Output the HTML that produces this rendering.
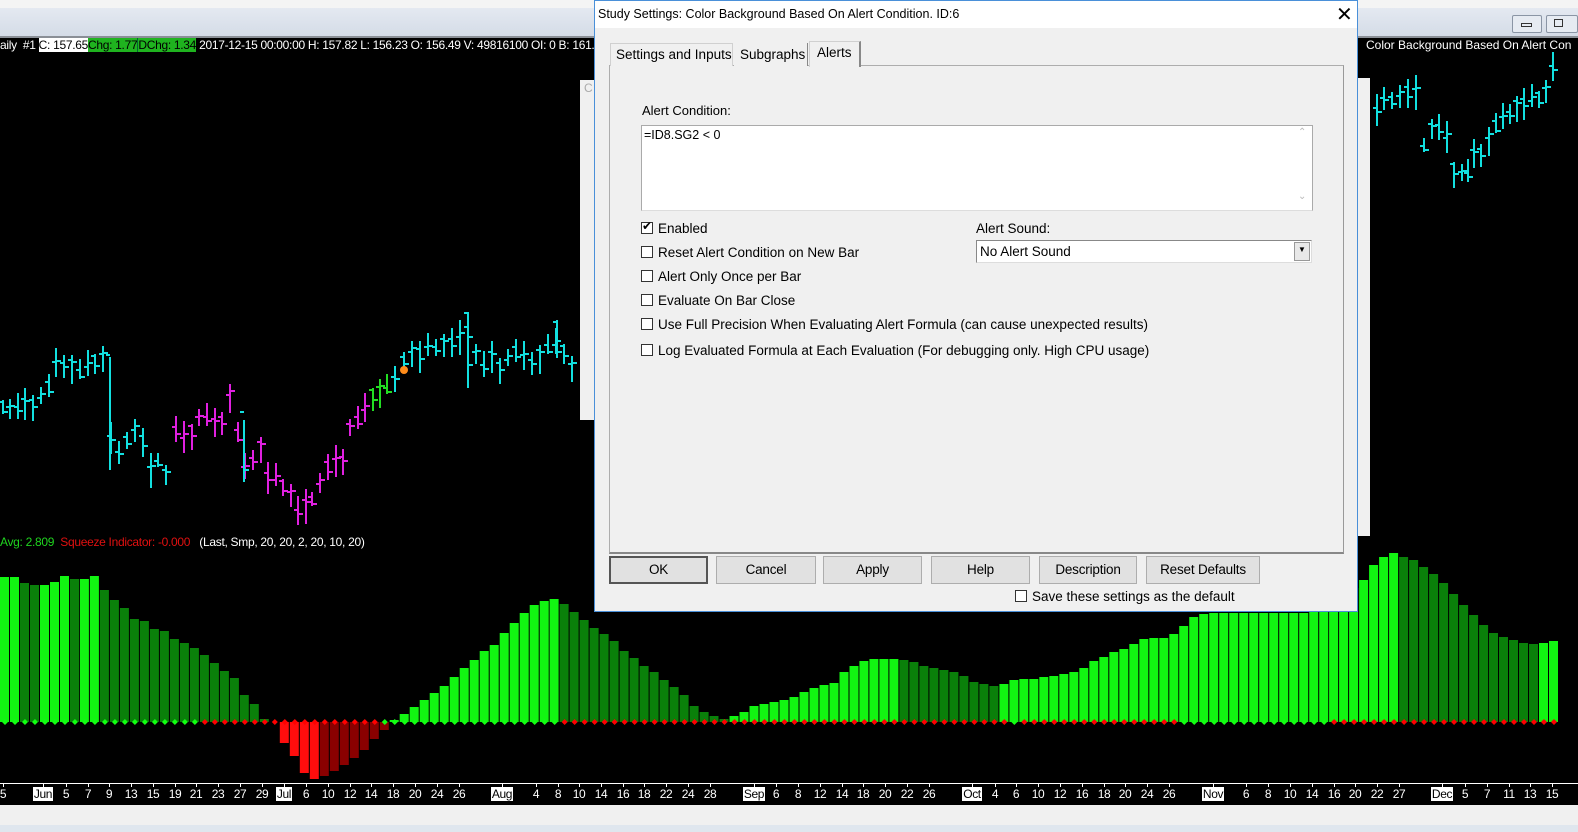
<!DOCTYPE html>
<html><head><meta charset="utf-8"><style>
*{margin:0;padding:0;box-sizing:border-box}
body{width:1578px;height:832px;overflow:hidden;background:#000;font-family:"Liberation Sans",sans-serif;position:relative}
.abs{position:absolute}
.t{position:absolute;white-space:nowrap}
.dlg{font-size:13.5px;color:#000}
.cb{position:absolute;width:12px;height:12px;border:1px solid #333;background:#fff}
.btn{position:absolute;top:555px;height:28px;background:#e1e1e1;border:1px solid #adadad;font-size:13.5px;text-align:center;line-height:26px;letter-spacing:-0.2px}
</style></head><body>
<div class="abs" style="left:0;top:0;width:1578px;height:8px;background:#f4f4f4"></div>
<div class="abs" style="left:0;top:8px;width:1578px;height:30px;background:linear-gradient(#e4e9f1,#d3dbe6)"></div>
<div class="abs" style="left:0;top:36px;width:1578px;height:2px;background:#8a8f96"></div>
<div class="abs" style="left:1512px;top:15px;width:30px;height:18px;border:1px solid #8a95a5;border-radius:2px;background:#e6ebf2"></div>
<div class="abs" style="left:1521px;top:23px;width:11px;height:4px;border:1px solid #333"></div>
<div class="abs" style="left:1546px;top:15px;width:32px;height:18px;border:1px solid #8a95a5;border-radius:2px;background:#e6ebf2"></div>
<div class="abs" style="left:1554px;top:19px;width:9px;height:8px;border:1px solid #333"></div>
<div class="t" style="left:0;top:38px;font-size:12px;color:#fff;line-height:15px;letter-spacing:-0.3px">aily&nbsp; #1 <span style="background:#fff;color:#000">C: 157.65</span><span style="background:#1fb31f;color:#000">Chg: 1.77</span><span style="background:#1fb31f;color:#000;border-left:1px solid #063">DChg: 1.34</span> 2017-12-15 00:00:00 H: 157.82 L: 156.23 O: 156.49 V: 49816100 OI: 0 B: 161.64</div>
<div class="t" style="left:1366px;top:38px;font-size:12px;color:#fff;line-height:15px">Color Background Based On Alert Con</div>
<div class="t" style="left:0;top:535px;font-size:12px;line-height:15px;letter-spacing:-0.3px"><span style="color:#1fd41f">Avg: 2.809</span>&nbsp; <span style="color:#e01010">Squeeze Indicator: -0.000</span>&nbsp;&nbsp; <span style="color:#fff">(Last, Smp, 20, 20, 2, 20, 10, 20)</span></div>
<svg class="abs" style="left:0;top:0" width="1578" height="832" id="sv"></svg>
<div class="abs" style="left:0;top:783px;width:1578px;height:1px;background:#fff"></div>
<div id="ax"></div>
<div class="abs" style="left:0;top:805px;width:1578px;height:20px;background:#f0f0f0"></div>
<div class="abs" style="left:0;top:825px;width:1578px;height:7px;background:#dfe6ee"></div>
<div class="abs" style="left:580px;top:80px;width:16px;height:340px;background:#f0f0f0"></div>
<div class="t" style="left:584px;top:81px;font-size:12px;color:#aaa">C</div>
<div class="abs" style="left:1356px;top:78px;width:14px;height:458px;background:#f0f0f0"></div>
<div class="abs dlg" style="left:594px;top:0;width:764px;height:612px;background:#f0f0f0;border:1px solid #4a90d9">
 <div class="abs" style="left:0;top:0;width:762px;height:27px;background:#fff"></div>
 <div class="t" style="left:3px;top:6px;font-size:12.5px">Study Settings: Color Background Based On Alert Condition. ID:6</div>
 <div class="t" style="left:741px;top:1px;font-size:20px;font-weight:300">✕</div>
 <div class="abs" style="left:14px;top:64px;width:735px;height:489px;border:1px solid #adadad;border-right-color:#999;border-bottom:2px solid #888;background:#f0f0f0"></div>
 <div class="abs" style="left:15px;top:42px;width:123px;height:23px;border:1px solid #d0d0d0;border-bottom:none;background:#f0f0f0"></div>
 <div class="t" style="left:21px;top:46px">Settings and Inputs</div>
 <div class="abs" style="left:139px;top:42px;width:74px;height:23px;border-right:1px solid #888;background:#f0f0f0"></div>
 <div class="t" style="left:145px;top:46px">Subgraphs</div>
 <div class="abs" style="left:214px;top:40px;width:52px;height:26px;border:1px solid #d0d0d0;border-right:2px solid #888;border-bottom:none;background:#f0f0f0"></div>
 <div class="t" style="left:222px;top:44px">Alerts</div>
 <div class="t" style="left:47px;top:102px;font-size:13px">Alert Condition:</div>
 <div class="abs" style="left:46px;top:124px;width:672px;height:86px;background:#fff;border:1px solid #aaa;border-bottom-color:#ddd"></div>
 <div class="t" style="left:49px;top:127px;font-size:12.5px">=ID8.SG2 &lt; 0</div>
 <div class="t" style="left:703px;top:126px;font-size:10px;color:#bbb">⌃</div>
 <div class="t" style="left:703px;top:190px;font-size:10px;color:#bbb">⌄</div>
 <div class="cb" style="left:46px;top:221px"></div><div class="t" style="left:47px;top:218px;font-size:12px">✔</div>
 <div class="t" style="left:63px;top:220px">Enabled</div>
 <div class="cb" style="left:46px;top:245px"></div><div class="t" style="left:63px;top:244px">Reset Alert Condition on New Bar</div>
 <div class="cb" style="left:46px;top:269px"></div><div class="t" style="left:63px;top:268px">Alert Only Once per Bar</div>
 <div class="cb" style="left:46px;top:293px"></div><div class="t" style="left:63px;top:292px">Evaluate On Bar Close</div>
 <div class="cb" style="left:46px;top:317px"></div><div class="t" style="left:63px;top:316px">Use Full Precision When Evaluating Alert Formula (can cause unexpected results)</div>
 <div class="cb" style="left:46px;top:343px"></div><div class="t" style="left:63px;top:342px">Log Evaluated Formula at Each Evaluation (For debugging only. High CPU usage)</div>
 <div class="t" style="left:381px;top:220px">Alert Sound:</div>
 <div class="abs" style="left:381px;top:239px;width:336px;height:23px;background:#fff;border:1px solid #888;border-right-color:#ddd;border-bottom-color:#ddd"></div>
 <div class="t" style="left:385px;top:243px">No Alert Sound</div>
 <div class="abs" style="left:699px;top:241px;width:16px;height:19px;background:#e8e8e8;border:1px solid #999"></div>
 <div class="t" style="left:703px;top:244px;font-size:8px">▼</div>
 <div class="btn" style="left:14px;width:99px;border:2px solid #555;line-height:24px">OK</div>
 <div class="btn" style="left:121px;width:100px">Cancel</div>
 <div class="btn" style="left:228px;width:99px">Apply</div>
 <div class="btn" style="left:336px;width:99px">Help</div>
 <div class="btn" style="left:444px;width:98px">Description</div>
 <div class="btn" style="left:551px;width:114px">Reset Defaults</div>
 <div class="cb" style="left:420px;top:589px"></div>
 <div class="t" style="left:437px;top:588px">Save these settings as the default</div>
</div>
<script>
var sv=document.getElementById('sv'),h='';
var tops=[577,577,583,585,585,582,576,579,579,576,590,600,608,619,621,629,631,639,643,648,655,663,671,678,695,704,719,722,743,756,773,779,776,771,765,758,750,739,730,720,714,707,700,693,686,677,668,660,651,645,633,623,613,605,601,599,604,612,620,628,634,641,651,658,666,672,680,687,695,706,712,716,719,716,712,706,704,702,700,697,692,688,685,683,672,666,661,659,659,659,660,662,666,668,670,672,676,682,684,686,684,680,679,679,677,676,674,672,668,661,657,652,649,644,639,638,638,634,626,617,614,613,613,613,613,613,613,613,613,613,613,611,604,599,591,588,580,565,557,553,557,560,567,574,583,594,605,615,625,633,637,640,643,644,643,641];
var Z=722,p=1559/tops.length;
for(var i=0;i<tops.length;i++){var x=i*p,t=tops[i],v=Z-t,pv=i?Z-tops[i-1]:v;var c;
 if(t<=Z){c=(v>=pv)?'#12f512':'#0a800a';h+='<rect x="'+x.toFixed(1)+'" y="'+t+'" width="'+(p-1).toFixed(1)+'" height="'+(Z-t)+'" fill="'+c+'"/>';}
 else{c=(t>=tops[i-1])?'#ff0d0d':'#8a0000';h+='<rect x="'+x.toFixed(1)+'" y="'+Z+'" width="'+(p-1).toFixed(1)+'" height="'+(t-Z)+'" fill="'+c+'"/>';}
 var red=(x>195&&x<375)||(x>550&&x<1170&&!(x>1000&&x<1010))||(x>1320);
 var cx=x+p/2;h+='<path d="M'+cx+' '+(Z-3)+'l3 3-3 3-3-3z" fill="'+(red?'#f00':'#1f1')+'"/>';}
function bar(x,o,c,hi,lo,col){h+='<path d="M'+x+' '+hi+'V'+lo+'M'+(x-4)+' '+o+'H'+x+'M'+x+' '+c+'H'+(x+5)+'" stroke="'+col+'" stroke-width="2" fill="none"/>';}
var pts=[[3,408],[10,410],[18,407],[25,405],[33,403],[41,398],[49,388],[56,365],[64,363],[72,366],[80,373],[88,367],[95,362],[103,357],[111,436],[119,458],[127,440],[135,430],[143,442],[151,470],[158,461],[166,476],[176,430],[184,438],[192,432],[199,420],[207,417],[215,425],[222,420],[230,395],[238,436],[245,470],[253,458],[261,448],[268,476],[276,480],[283,487],[291,495],[298,510],[306,506],[312,500],[320,484],[328,468],[336,462],[343,457],[350,430],[358,420],[365,410],[373,396],[380,390],[387,388],[395,383],[404,360],[412,352],[420,355],[428,350],[436,347],[444,345],[452,342],[460,337],[468,333],[476,355],[484,365],[492,358],[500,366],[508,360],[516,353],[524,358],[532,360],[540,356],[548,348],[556,345],[564,352],[572,367],[1377,108],[1384,104],[1392,100],[1400,96],[1408,93],[1416,92],[1424,146],[1432,130],[1439,128],[1447,138],[1454,170],[1462,175],[1468,173],[1474,156],[1481,152],[1489,138],[1496,127],[1503,120],[1510,112],[1517,107],[1524,102],[1532,101],[1539,99],[1546,91],[1553,66]];
for(var j=0;j<pts.length;j++){var q=pts[j],x=q[0],y=q[1];var col=(x>168&&x<370)?'#e020e0':(x>370&&x<392)?'#22dd22':'#12e0e0';bar(x,y-3+((j%3)-1)*3,y+((j%2)?-4:4),y-8-(j%4)*3,y+6+(j%5)*3,col);}
bar(110,355,440,357,470,'#12e0e0');bar(244,412,470,420,482,'#12e0e0');bar(468,313,365,312,388,'#12e0e0');bar(557,322,352,320,358,'#12e0e0');
h+='<circle cx="404" cy="370" r="4" fill="#ff8c1a"/>';
sv.innerHTML=h;
var L=[[3,'5'],[43,'Jun',1],[66,'5'],[88,'7'],[109,'9'],[131,'13'],[153,'15'],[175,'19'],[196,'21'],[218,'23'],[240,'27'],[262,'29'],[284,'Jul',1],[306,'6'],[328,'10'],[350,'12'],[371,'14'],[393,'18'],[415,'20'],[437,'24'],[459,'26'],[502,'Aug',1],[536,'4'],[558,'8'],[579,'10'],[601,'14'],[623,'16'],[644,'18'],[666,'22'],[688,'24'],[710,'28'],[754,'Sep',1],[776,'6'],[798,'8'],[820,'12'],[842,'14'],[863,'18'],[885,'20'],[907,'22'],[929,'26'],[972,'Oct',1],[995,'4'],[1016,'6'],[1038,'10'],[1060,'12'],[1082,'16'],[1104,'18'],[1125,'20'],[1147,'24'],[1169,'26'],[1213,'Nov',1],[1246,'6'],[1268,'8'],[1290,'10'],[1312,'14'],[1334,'16'],[1355,'20'],[1377,'22'],[1399,'27'],[1442,'Dec',1],[1465,'5'],[1487,'7'],[1509,'11'],[1530,'13'],[1552,'15']];
var a='';for(var k=0;k<L.length;k++){var l=L[k];a+='<div class="abs" style="left:'+l[0]+'px;top:783px;width:1px;height:4px;background:#fff"></div><div class="t" style="left:'+(l[0]-20)+'px;width:40px;text-align:center;top:787px;font-size:12px;line-height:14px;letter-spacing:-0.4px"><span style="'+(l[2]?'background:#fff;color:#000;padding:0 1px':'color:#fff')+'">'+l[1]+'</span></div>';}
document.getElementById('ax').innerHTML=a;
</script>
</body></html>
